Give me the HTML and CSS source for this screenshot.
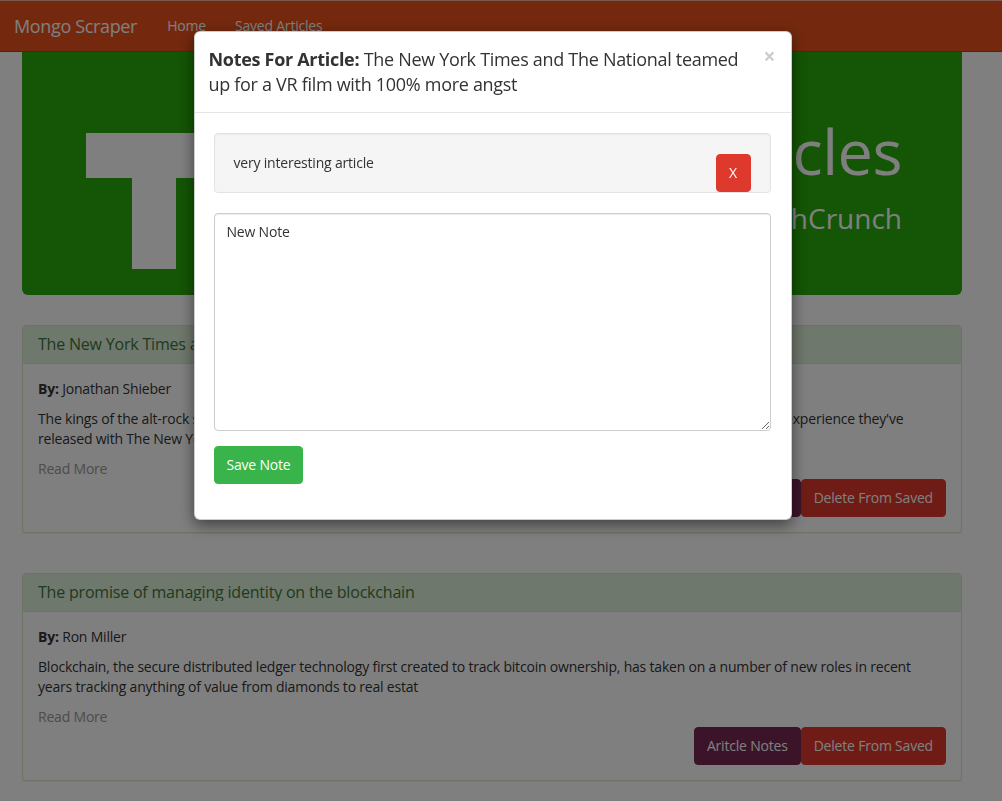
FILE: index.html
```html
<!DOCTYPE html>
<html lang="en">
<head>
<meta charset="utf-8">
<title>Mongo Scraper</title>
<link rel="stylesheet" href="styles.css">
</head>
<body>
<nav class="navbar">
  <a class="brand" href="#">Mongo Scraper</a>
  <ul class="nav">
    <li><a href="#">Home</a></li>
    <li><a href="#">Saved Articles</a></li>
  </ul>
</nav>

<div class="container">
  <div class="jumbotron">
    <svg class="logo" width="200" height="243" viewBox="0 0 200 243" aria-hidden="true">
      <rect x="4" y="81" width="136" height="45" fill="#fff"/>
      <rect x="50" y="126" width="44" height="91" fill="#fff"/>
      <rect x="140" y="126" width="60" height="45" fill="#fff"/>
      <rect x="140" y="172" width="60" height="45" fill="#fff"/>
    </svg>
    <div class="jumbo-text">
      <h1>Saved Articles</h1>
      <h2>From TechCrunch</h2>
    </div>
  </div>

  <div class="panel">
    <div class="panel-heading">
      <h3 class="panel-title">The New York Times and The National teamed up for a VR film with 100% more angst</h3>
    </div>
    <div class="panel-body">
      <p class="byline"><strong>By:</strong> Jonathan Shieber</p>
      <p class="summary">The kings of the alt-rock sad-dad genre, The National, have teamed up for a brand new dark virtual reality music video experience they've released with The New York Times, and it is every bit as sad as you'd expect</p>
      <a class="read-more" href="#">Read More</a>
      <div class="actions">
        <button class="btn btn-info">Aritcle Notes</button><button class="btn btn-danger">Delete From Saved</button>
      </div>
    </div>
  </div>

  <div class="panel">
    <div class="panel-heading">
      <h3 class="panel-title">The promise of managing identity on the blockchain</h3>
    </div>
    <div class="panel-body">
      <p class="byline"><strong>By:</strong> Ron Miller</p>
      <p class="summary">Blockchain, the secure distributed ledger technology first created to track bitcoin ownership, has taken on a number of new roles in recent years tracking anything of value from diamonds to real estat</p>
      <a class="read-more" href="#">Read More</a>
      <div class="actions">
        <button class="btn btn-info">Aritcle Notes</button><button class="btn btn-danger">Delete From Saved</button>
      </div>
    </div>
  </div>
</div>

<div class="backdrop"></div>

<div class="modal">
  <div class="modal-dialog">
    <div class="modal-content">
      <div class="modal-header">
        <button class="close" type="button">&times;</button>
        <h4 class="modal-title"><strong>Notes For Article:</strong> The New York Times and The National teamed up for a VR film with 100% more angst</h4>
      </div>
      <div class="modal-body">
        <div class="well">
          <button class="btn btn-danger note-delete">X</button>
          very interesting article
        </div>
        <textarea class="note-input">New Note</textarea>
        <button class="btn btn-success save-note">Save Note</button>
      </div>
    </div>
  </div>
</div>
</body>
</html>
```

FILE: styles.css
```css
* { box-sizing: border-box; }

html, body { margin: 0; padding: 0; }

body {
  font-family: "Open Sans", "Noto Sans", sans-serif;
  font-size: 14px;
  line-height: 20px;
  letter-spacing: -0.2px;
  color: #333;
  background: #fff;
  padding-right: 17px;
  overflow: hidden;
  height: 801px;
}

a { text-decoration: none; }

/* Navbar */
.navbar {
  display: flex;
  align-items: center;
  height: 52px;
  margin-right: -17px;
  background: #e8521c;
  border-top: 1px solid #f6b39b;
  border-bottom: 1px solid #c23f10;
  padding: 0 14px;
}
.brand {
  color: #fff;
  font-size: 18px;
  line-height: 20px;
  letter-spacing: -0.35px;
  padding: 15px 15px 15px 0;
}
.nav {
  display: flex;
  list-style: none;
  margin: 0;
  padding: 0;
}
.nav a {
  display: block;
  color: #fff;
  padding: 15px 14px 15px 15px;
  line-height: 20px;
}

/* Container */
.container {
  width: 940px;
  margin: 0 0 0 22px;
}

/* Jumbotron */
.jumbotron {
  display: flex;
  justify-content: space-between;
  background: #28ac0a;
  border-radius: 0 0 6px 6px;
  padding: 0 60px;
  margin-bottom: 30px;
  color: #fff;
  letter-spacing: 0;
}
.logo { display: block; flex: none; }
.jumbo-text {
  text-align: right;
  padding-top: 64px;
}
.jumbo-text h1 {
  margin: 0;
  font-size: 63px;
  line-height: 1.1;
  font-weight: 400;
  letter-spacing: -0.5px;
}
.jumbo-text h2 {
  margin: 18px 0 0;
  font-size: 28px;
  line-height: 1.1;
  font-weight: 400;
}

/* Panels */
.panel {
  border: 1px solid #d6e9c6;
  border-radius: 4px;
  background: #fff;
  box-shadow: 0 1px 1px rgba(0,0,0,.05);
  margin-bottom: 40px;
}
.panel-heading {
  background: #dff0d8;
  color: #3c763d;
  border-bottom: 1px solid #d6e9c6;
  border-radius: 3px 3px 0 0;
  padding: 10px 15px;
}
.panel-title {
  margin: 0;
  font-size: 16px;
  line-height: 17px;
  font-weight: 400;
  white-space: nowrap;
  overflow: hidden;
}
.panel-body { padding: 15px; }
.byline, .summary { margin: 0 0 10px; }
.read-more {
  display: block;
  color: #999;
}
.actions {
  display: flex;
  justify-content: flex-end;
}

/* Buttons */
.btn {
  font-family: inherit;
  font-size: 14px;
  line-height: 20px;
  letter-spacing: inherit;
  padding: 8px 12px;
  border: 1px solid transparent;
  border-radius: 4px;
  color: #fff;
  cursor: pointer;
}
.btn-info { background: #772953; border-color: #772953; }
.btn-danger { background: #df382c; border-color: #df382c; }
.btn-success { background: #38b44a; border-color: #38b44a; }

/* Backdrop & modal */
.backdrop {
  position: fixed;
  inset: 0;
  background: rgba(0,0,0,.5);
}
.modal {
  position: fixed;
  inset: 0;
  padding-right: 17px;
}
.modal-dialog {
  width: 598px;
  margin: 31px auto 0;
}
.modal-content {
  background: #fff;
  border: 1px solid rgba(0,0,0,.2);
  border-radius: 6px;
  box-shadow: 0 5px 15px rgba(0,0,0,.5);
}
.modal-header {
  padding: 15px 15px 15px 14px;
  border-bottom: 1px solid #e5e5e5;
}
.close {
  float: right;
  margin-top: -1px;
  padding: 0;
  border: 0;
  background: transparent;
  font-family: inherit;
  font-size: 21px;
  font-weight: 700;
  line-height: 1;
  color: #000;
  opacity: .2;
}
.modal-title {
  margin: 0;
  font-size: 18px;
  line-height: 25px;
  font-weight: 400;
  letter-spacing: -0.3px;
}
.modal-title strong { font-weight: 700; }
.modal-body { padding: 20px 20px 35px 19px; }

.well {
  background: #f5f5f5;
  border: 1px solid #e3e3e3;
  border-radius: 4px;
  box-shadow: inset 0 1px 1px rgba(0,0,0,.05);
  padding: 19px;
  margin-bottom: 20px;
  height: 60px;
}
.note-delete {
  float: right;
  margin-top: 1px;
  width: 35px;
  padding: 8px 0;
  text-align: center;
}
.note-input {
  display: block;
  width: 100%;
  height: 218px;
  padding: 8px 12px 4px;
  font-family: inherit;
  font-size: 14px;
  line-height: 20px;
  letter-spacing: inherit;
  color: #333;
  border: 1px solid #ccc;
  border-radius: 4px;
  box-shadow: inset 0 1px 1px rgba(0,0,0,.075);
  resize: vertical;
  margin: 0 0 15px;
}
```
